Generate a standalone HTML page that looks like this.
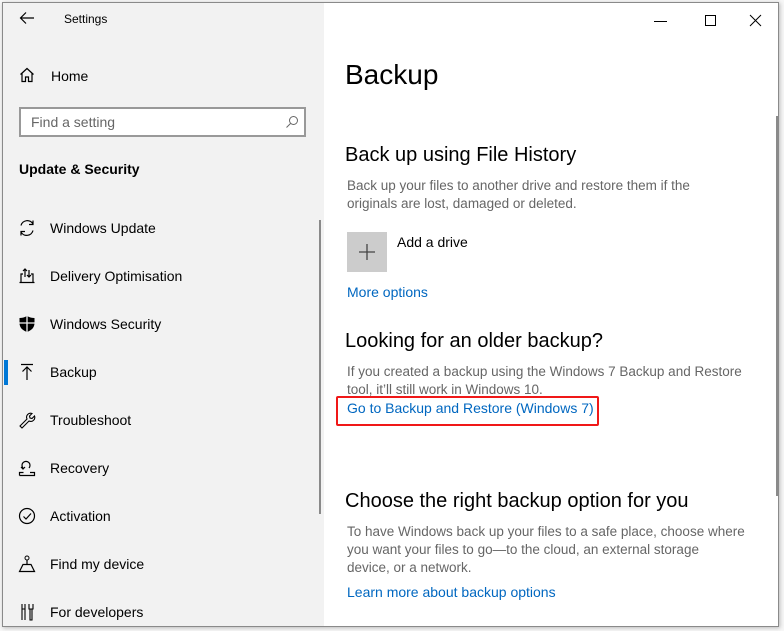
<!DOCTYPE html>
<html><head><style>
*{margin:0;padding:0;box-sizing:border-box}
body{width:784px;height:631px;background:#f7f7f7;position:relative;overflow:hidden;font-family:"Liberation Sans",sans-serif;}
.win{position:absolute;left:2px;top:2px;width:777px;height:625px;border:1px solid #8a8a8a;background:#fff;box-shadow:1px 1px 4px rgba(0,0,0,.25)}
.side{position:absolute;left:0;top:0;width:321px;height:623px;background:#f2f2f2}
.t{position:absolute;white-space:nowrap;color:#000}
.s{font-size:14px}
.ic{position:absolute}
.link{color:#0067c0;font-size:14px}
.gray{color:#666;font-size:13.5px;line-height:18px}
.h2{font-size:20px;color:#000}
</style></head><body>
<div class="win">
<div class="side">
 <svg class="ic" style="left:16px;top:8px" width="16" height="14"><path d="M15 7H2M7 1.5L1.5 7 7 12.5" stroke="#000" fill="none" stroke-width="1.2"/></svg>
 <div class="t" style="left:61px;top:9px;font-size:12px">Settings</div>
 <svg class="ic" style="left:16px;top:64px" width="16" height="16"><path d="M1.5 7.5L8 1.5l6.5 6M3 6.5v8h3.5v-4.5h3v4.5H13v-8" stroke="#000" fill="none" stroke-width="1.2"/></svg>
 <div class="t s" style="left:48px;top:65px">Home</div>
 <div style="position:absolute;left:16px;top:104px;width:287px;height:30px;border:2px solid #999;background:#fff"></div>
 <div class="t s" style="left:28px;top:111px;color:#666">Find a setting</div>
 <svg class="ic" style="left:282px;top:112px" width="14" height="14"><circle cx="8.5" cy="5.5" r="4" stroke="#666" fill="none"/><path d="M5.5 8.5L1.5 12.5" stroke="#666"/></svg>
 <div class="t" style="left:16px;top:158px;font-size:14px;font-weight:bold">Update &amp; Security</div>

 <svg class="ic" style="left:15px;top:216px" width="18" height="18"><path d="M3 6.5A6.5 6.5 0 0 1 15 5M15 11.5A6.5 6.5 0 0 1 3 13M15 1.5v4h-4M3 16.5v-4h4" stroke="#000" fill="none" stroke-width="1.2"/></svg>
 <div class="t s" style="left:47px;top:217px">Windows Update</div>
 <svg class="ic" style="left:15px;top:264px" width="18" height="18"><path d="M1.5 15.5h15M3 15V7h2M13 7h2v8M7 2v8M5 4l2-2 2 2M11 10V3M9 8l2 2 2-2" stroke="#000" fill="none" stroke-width="1.2"/></svg>
 <div class="t s" style="left:47px;top:265px">Delivery Optimisation</div>
 <svg class="ic" style="left:15px;top:312px" width="18" height="18"><path d="M9 1C6 2.5 4 3 1.5 3v5C1.5 13 5 15.5 9 17c4-1.5 7.5-4 7.5-9V3C14 3 12 2.5 9 1z" fill="#000"/><path d="M9 1v16M1.5 8h15" stroke="#f2f2f2" stroke-width="1.3"/></svg>
 <div class="t s" style="left:47px;top:313px">Windows Security</div>
 <div style="position:absolute;left:1px;top:357px;width:4px;height:25px;background:#0078d7"></div>
 <svg class="ic" style="left:16px;top:360px" width="16" height="18"><path d="M2 1.5h12M8 4v13M3.5 8.5L8 4l4.5 4.5" stroke="#000" fill="none" stroke-width="1.2"/></svg>
 <div class="t s" style="left:47px;top:361px">Backup</div>
 <svg class="ic" style="left:15px;top:408px" width="18" height="18"><path d="M2 15l7-7a4 4 0 0 1 5-5.5l-2.5 2.5.5 2 2 .5L16.5 5A4 4 0 0 1 11 10l-7 7z" stroke="#000" fill="none" stroke-width="1.1"/></svg>
 <div class="t s" style="left:47px;top:409px">Troubleshoot</div>
 <svg class="ic" style="left:15px;top:456px" width="18" height="18"><path d="M1.5 16.5h15v-3H12M1.5 16.5v-3h4M5 9a4 4 0 1 1 6 0M3 8l2 2 2-2" stroke="#000" fill="none" stroke-width="1.2"/></svg>
 <div class="t s" style="left:47px;top:457px">Recovery</div>
 <svg class="ic" style="left:15px;top:504px" width="18" height="18"><circle cx="9" cy="9" r="7.5" stroke="#000" fill="none" stroke-width="1.2"/><path d="M5.5 9.5l2.5 2.5 5-5.5" stroke="#000" fill="none" stroke-width="1.2"/></svg>
 <div class="t s" style="left:47px;top:505px">Activation</div>
 <svg class="ic" style="left:15px;top:552px" width="18" height="18"><circle cx="9" cy="3" r="2" stroke="#000" fill="none"/><path d="M9 5v5M1.5 16.5h15L13 9.5H5z" stroke="#000" fill="none" stroke-width="1.2"/></svg>
 <div class="t s" style="left:47px;top:553px">Find my device</div>
 <svg class="ic" style="left:16px;top:600px" width="16" height="18"><path d="M3 1v16M6 1v16M3 6h3M10 1v5h4V1M11 6v11h2V6" stroke="#000" fill="none" stroke-width="1.1"/></svg>
 <div class="t s" style="left:47px;top:601px">For developers</div>
 <div style="position:absolute;left:316px;top:217px;width:2px;height:294px;background:#8a8a8a"></div>
</div>
<svg class="ic" style="left:650px;top:12px" width="16" height="12"><path d="M1 6.5h13" stroke="#000"/></svg>
<svg class="ic" style="left:701px;top:11px" width="14" height="14"><rect x="1.5" y="1.5" width="10" height="10" stroke="#000" fill="none"/></svg>
<svg class="ic" style="left:746px;top:11px" width="14" height="14"><path d="M1 1l11 11M12 1L1 12" stroke="#000"/></svg>
<div style="position:absolute;left:773px;top:113px;width:2px;height:380px;background:#8a8a8a"></div>

<div class="t" style="left:342px;top:56px;font-size:28px">Backup</div>
<div class="t h2" style="left:342px;top:141px">Back up using File History</div>
<div class="t gray" style="left:344px;top:174px">Back up your files to another drive and restore them if the<br>originals are lost, damaged or deleted.</div>
<div style="position:absolute;left:344px;top:229px;width:40px;height:40px;background:#ccc"></div>
<svg class="ic" style="left:354px;top:239px" width="20" height="20"><path d="M10 2v16M2 10h16" stroke="#444" stroke-width="1.3"/></svg>
<div class="t s" style="left:394px;top:231px">Add a drive</div>
<div class="t link" style="left:344px;top:281px">More options</div>
<div class="t h2" style="left:342px;top:327px">Looking for an older backup?</div>
<div class="t gray" style="left:344px;top:360px">If you created a backup using the Windows 7 Backup and Restore<br>tool, it’ll still work in Windows 10.</div>
<div style="position:absolute;left:333px;top:393px;width:263px;height:30px;border:2px solid #f01818;border-radius:2px"></div>
<div class="t link" style="left:344px;top:397px">Go to Backup and Restore (Windows 7)</div>
<div class="t h2" style="left:342px;top:487px">Choose the right backup option for you</div>
<div class="t gray" style="left:344px;top:520px">To have Windows back up your files to a safe place, choose where<br>you want your files to go—to the cloud, an external storage<br>device, or a network.</div>
<div class="t link" style="left:344px;top:581px">Learn more about backup options</div>
</div>
</body></html>
